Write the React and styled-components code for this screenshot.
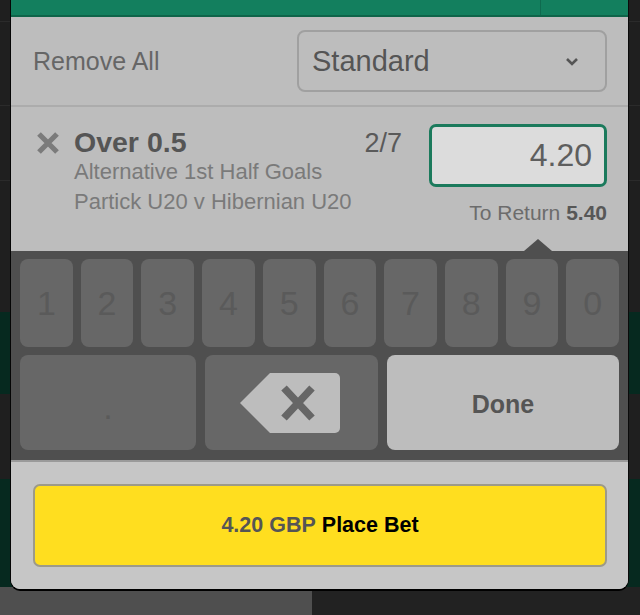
import React from "react";
import styled, { createGlobalStyle } from "styled-components";

const Global = createGlobalStyle`
  html, body { margin: 0; padding: 0; background: #1f1f1f; }
  body { font-family: "Liberation Sans", Arial, sans-serif; }
  #root { width: 640px; height: 615px; overflow: hidden; }
  * { box-sizing: border-box; }
`;

const Page = styled.div`
  position: relative;
  width: 640px;
  height: 615px;
  display: flex;
  flex-direction: column;
  background: #1f1f1f;
`;

const BgRow = styled.div`
  height: ${(p) => p.$h}px;
  background: ${(p) => (p.$green ? "#06291f" : "#1f1f1f")};
  border-bottom: ${(p) => (p.$line ? "1px solid #2b2b2b" : "none")};
`;

const BgBottom = styled.div`
  flex: 1;
  display: grid;
  grid-template-columns: 312px 1fr;
`;

const BgHalf = styled.div`
  background: ${(p) => p.$c};
`;

const Modal = styled.div`
  position: absolute;
  left: 11px;
  top: 0;
  width: 617px;
  height: 589px;
  display: flex;
  flex-direction: column;
  background: #bdbdbd;
  border-radius: 0 0 9px 9px;
  box-shadow: -1px 0 0 #050505, 1px 0 0 #0a0a0a, 0 2px 0 #000;
  overflow: hidden;
`;

const Header = styled.div`
  height: 17px;
  background: #137f5e;
  border-bottom: 2px solid #0e6449;
  display: flex;
  justify-content: flex-end;
`;

const HeaderCell = styled.div`
  width: 88px;
  border-left: 1px solid #0f6a4f;
`;

const TopRow = styled.div`
  display: flex;
  align-items: center;
  justify-content: space-between;
  padding: 13px 21px 13px 22px;
  border-bottom: 2px solid #acacac;
`;

const RemoveAll = styled.span`
  font-size: 25px;
  color: #666;
`;

const Select = styled.div`
  width: 310px;
  height: 62px;
  border: 2px solid #a0a0a0;
  border-radius: 8px;
  display: flex;
  align-items: center;
  justify-content: space-between;
  padding: 0 26px 0 13px;
  font-size: 29px;
  color: #555;
`;

const BetRow = styled.div`
  height: 144px;
  display: flex;
  align-items: flex-start;
  padding: 17px 21px 0 25px;
`;

const RemoveIcon = styled.svg`
  width: 24px;
  height: 24px;
  margin-top: 7px;
  margin-right: 14px;
  flex-shrink: 0;
`;

const Info = styled.div`
  flex: 1;
  margin-top: 3px;
  display: flex;
  flex-direction: column;
`;

const Title = styled.div`
  font-size: 28.5px;
  line-height: 30px;
  font-weight: 700;
  color: #555;
`;

const Sub = styled.div`
  font-size: 22px;
  line-height: 30px;
  color: #7a7a7a;
`;

const Odds = styled.div`
  margin-top: 4px;
  margin-right: 27px;
  font-size: 27px;
  line-height: 30px;
  color: #5a5a5a;
`;

const StakeCol = styled.div`
  width: 178px;
  display: flex;
  flex-direction: column;
  align-items: flex-end;
`;

const StakeInput = styled.div`
  width: 178px;
  height: 63px;
  border: 3px solid #1b7a5c;
  border-radius: 7px;
  background: #dcdcdc;
  display: flex;
  align-items: center;
  justify-content: flex-end;
  padding-right: 12px;
  font-size: 32px;
  color: #5e5e5e;
`;

const ToReturn = styled.div`
  margin-top: 14px;
  font-size: 21px;
  line-height: 24px;
  color: #6c6c6c;
  b { color: #575757; }
`;

const Keyboard = styled.div`
  position: relative;
  background: #4f4f4f;
  padding: 8px 9px 10px 9px;
  display: flex;
  flex-direction: column;
  gap: 8px;
  border-bottom: 2px solid #9a9a9a;
  &::before {
    content: "";
    position: absolute;
    top: -12px;
    left: 513px;
    border-left: 14px solid transparent;
    border-right: 14px solid transparent;
    border-bottom: 12px solid #4f4f4f;
  }
`;

const DigitRow = styled.div`
  display: grid;
  grid-template-columns: repeat(10, 1fr);
  gap: 8px;
  height: 88px;
`;

const ActionRow = styled.div`
  display: grid;
  grid-template-columns: 176px 173px 1fr;
  gap: 9px;
  height: 95px;
`;

const Key = styled.div`
  border-radius: 8px;
  background: ${(p) => (p.$light ? "#bdbdbd" : "#676767")};
  color: ${(p) => (p.$light ? "#555" : "#5a5a5a")};
  display: flex;
  align-items: center;
  justify-content: center;
  padding-top: ${(p) => p.$pt || 0}px;
  padding-right: ${(p) => p.$pr || 0}px;
  font-size: ${(p) => (p.$light ? "25px" : "34px")};
  font-weight: ${(p) => (p.$light ? 700 : 400)};
`;

const Footer = styled.div`
  flex: 1;
  background: #c6c6c6;
  padding: 22px 21px 0 22px;
`;

const PlaceBet = styled.div`
  height: 83px;
  background: #ffde1f;
  border: 2px solid #9d9a88;
  border-radius: 7px;
  display: flex;
  align-items: center;
  justify-content: center;
  font-size: 21.5px;
  font-weight: 700;
  color: #000;
  gap: 6px;
`;

const Amount = styled.span`
  color: #555;
`;

const digits = ["1", "2", "3", "4", "5", "6", "7", "8", "9", "0"];

export default function App() {
  return (
    <>
      <Global />
      <Page>
        <BgRow $h={22} $line />
        <BgRow $h={84} $line />
        <BgRow $h={75} $line />
        <BgRow $h={131} />
        <BgRow $h={82} $green />
        <BgRow $h={85} />
        <BgRow $h={108} $green />
        <BgBottom>
          <BgHalf $c="#4f4f4f" />
          <BgHalf $c="#222" />
        </BgBottom>
        <Modal>
          <Header>
            <HeaderCell />
          </Header>
          <TopRow>
            <RemoveAll>Remove All</RemoveAll>
            <Select>
              <span>Standard</span>
              <svg width="14" height="9" viewBox="0 0 14 9">
                <path d="M2 2 L7 7 L12 2" fill="none" stroke="#555" strokeWidth="2.6" />
              </svg>
            </Select>
          </TopRow>
          <BetRow>
            <RemoveIcon viewBox="0 0 24 24">
              <path d="M3 3 L21 21 M21 3 L3 21" stroke="#7b7b7b" strokeWidth="5.2" />
            </RemoveIcon>
            <Info>
              <Title>Over 0.5</Title>
              <Sub>Alternative 1st Half Goals</Sub>
              <Sub>Partick U20 v Hibernian U20</Sub>
            </Info>
            <Odds>2/7</Odds>
            <StakeCol>
              <StakeInput>4.20</StakeInput>
              <ToReturn>
                To Return <b>5.40</b>
              </ToReturn>
            </StakeCol>
          </BetRow>
          <Keyboard>
            <DigitRow>
              {digits.map((d) => (
                <Key key={d}>{d}</Key>
              ))}
            </DigitRow>
            <ActionRow>
              <Key $pt={10}>.</Key>
              <Key $pr={4}>
                <svg width="100" height="60" viewBox="0 0 100 60">
                  <path d="M30 0 H95 a5 5 0 0 1 5 5 V55 a5 5 0 0 1 -5 5 H30 L0 30 Z" fill="#bdbdbd" />
                  <path d="M44 15 L72 45 M72 15 L44 45" stroke="#666" strokeWidth="7.5" />
                </svg>
              </Key>
              <Key $light $pt={4}>Done</Key>
            </ActionRow>
          </Keyboard>
          <Footer>
            <PlaceBet>
              <Amount>4.20 GBP</Amount>
              <span>Place Bet</span>
            </PlaceBet>
          </Footer>
        </Modal>
      </Page>
    </>
  );
}
